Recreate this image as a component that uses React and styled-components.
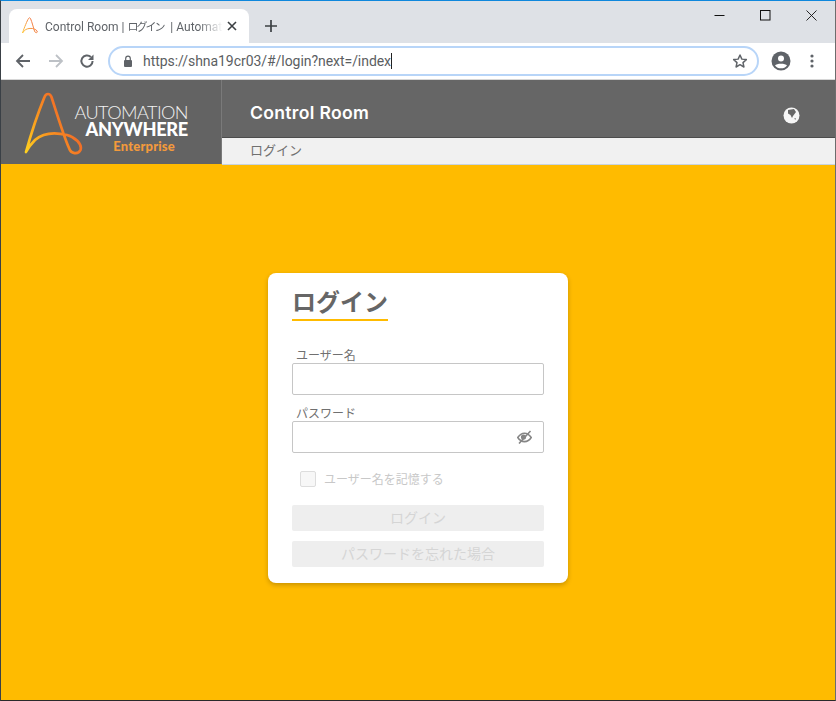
import React from "react";
import styled, { createGlobalStyle } from "styled-components";

const Global = createGlobalStyle`
  html, body { margin: 0; padding: 0; }
  body { width: 836px; height: 701px; overflow: hidden; background: #ffbb00; font-family: "Liberation Sans", "Noto Sans CJK JP", sans-serif; }
  * { box-sizing: border-box; }
`;

const Win = styled.div`
  width: 836px; height: 701px; display: flex; flex-direction: column;
  border-top: 1px solid #0f87dc; border-left: 1px solid #3a4046; border-right: 1px solid #6d6d6d;
  border-bottom: 1px solid #2a2a2a;
`;
const TabStrip = styled.div`
  height: 42px; background: #dee1e6; display: flex; align-items: flex-end; padding-left: 8px; position: relative; flex: none;
`;
const Tab = styled.div`
  width: 240px; height: 34px; background: #fff; border-radius: 8px 8px 0 0; display: flex; align-items: center;
  padding: 0 10px 0 12px; font: 12px "Roboto", "Noto Sans CJK JP", sans-serif; color: #5f6368;
`;
const TabTitle = styled.span`
  margin-left: 6px; width: 178px; margin-right: 3px; white-space: nowrap; overflow: hidden; flex: none;
  -webkit-mask-image: linear-gradient(to right, #000 86%, transparent 100%);
  mask-image: linear-gradient(to right, #000 86%, transparent 100%);
`;
const TabCjk = styled.span`font-size: 11px; letter-spacing: -2px; margin-right: 4px;`;
const NewTab = styled.div`margin: 0 0 3px 12px; height: 28px; width: 20px; display: flex; align-items: center; justify-content: center;`;
const WinControls = styled.div`position: absolute; right: 1px; top: 0; display: flex;`;
const WinBtn = styled.div`width: 46px; height: 29px; display: flex; align-items: center; justify-content: center;`;

const Toolbar = styled.div`
  height: 37px; background: #fff; display: flex; align-items: center; flex: none; border-bottom: 1px solid #d6d6d6; padding-left: 13px;
`;
const NavBtn = styled.div`width: 20px; height: 20px; display: flex; align-items: center; justify-content: center; margin-right: ${p => p.$gap}px;`;
const Omni = styled.div`
  width: 651px; height: 30px; border: 2px solid #b8d5f8; border-radius: 15px; display: flex; align-items: center; padding: 0 9px 0 13px;
  font: 14px "Roboto", sans-serif; color: #202124; margin-left: 11px; margin-bottom: 1px;
`;
const Url = styled.span`
  margin-left: 10px; flex: 1; color: #5b5e62; letter-spacing: -0.05px;
  b { font-weight: 400; color: #5b5e62; border-right: 1px solid #222; padding-right: 0; }
`;

const Header = styled.header`display: flex; align-items: flex-start; height: 85px; flex: none;`;
const LogoPanel = styled.div`
  width: 221px; height: 84px; background: #636363; border-right: 1px solid #7a7a7a; flex: none; padding: 12px 0 0 22px; display: flex;
`;
const LogoText = styled.div`
  width: 105px; display: flex; flex-direction: column; align-items: flex-end; color: #fff; padding-top: 12px;
`;
const LogoLine = styled.div`
  font: ${p => p.$w} ${p => p.$s}px/${p => p.$lh}px "Lato", sans-serif; letter-spacing: ${p => p.$ls}px; color: ${p => p.$c}; white-space: nowrap;
  margin-right: ${p => p.$mr || 0}px;
`;
const HeadRight = styled.div`flex: 1; display: flex; flex-direction: column;`;
const TitleBar = styled.div`
  height: 58px; background: #666; border-bottom: 1px solid #4c4c4c; display: flex; align-items: center; justify-content: space-between; padding: 8px 35px 0 28px;
`;
const Product = styled.div`font: 600 17.6px "Inter", sans-serif; letter-spacing: 0.3px; color: #fff;`;
const GlobeIcon = styled.svg`margin-top: 6px; flex: none;`;
const Crumb = styled.div`
  height: 27px; background: #f1f1f1; border-bottom: 1px solid #c8d4df; padding-left: 28px; font-size: 13px; line-height: 23px; color: #707070;
  font-family: "Noto Sans CJK JP", sans-serif;
`;

const Stage = styled.main`flex: 1; background: #ffbb00; display: flex; justify-content: center; padding: 108px 0 0 0;`;
const Card = styled.section`
  width: 300px; height: 310px; background: #fff; border-radius: 8px; box-shadow: 0 2px 5px rgba(0,0,0,.22); padding: 13px 24px 0;
  font-family: "Noto Sans CJK JP", sans-serif;
`;
const Title = styled.h1`
  margin: 0; display: inline-block; font: 700 24px/30px "Noto Sans CJK JP", sans-serif; color: #666; border-bottom: 2px solid #ffbb00; height: 35px;
`;
const Label = styled.label`display: block; font-size: 12px; line-height: 16px; color: #707070; padding-left: 4px; margin-top: ${p => p.$top}px;`;
const InputBox = styled.div`
  width: 252px; height: 32px; border: 1px solid #c6c6c6; border-radius: 2px; display: flex; align-items: center; justify-content: flex-end; padding-right: 11px;
`;
const Remember = styled.div`display: flex; align-items: center; margin: 18px 0 0 8px; font-size: 12px; line-height: 16px; color: #c8c8c8; gap: 8px;`;
const Check = styled.span`width: 16px; height: 16px; border: 1px solid #ddd; background: #f7f7f7; border-radius: 2px; flex: none;`;
const Btn = styled.div`
  width: 252px; height: 26px; background: #eee; border-radius: 2px; color: #d5d5d5; font-size: 14px; line-height: 25px; text-align: center;
  margin-top: ${p => p.$top}px;
`;

const Logo = () => (
  <svg width="60" height="66" viewBox="0 0 60 66" fill="none" style={{ flex: "none" }}>
    <defs>
      <linearGradient id="g" x1="0" y1="1" x2="1" y2="0.4">
        <stop offset="0" stopColor="#ffd21f" />
        <stop offset="0.45" stopColor="#f9931f" />
        <stop offset="1" stopColor="#ee5a2b" />
      </linearGradient>
    </defs>
    <path d="M3 60 C8 42 17 16 21.5 5 C23 1 27 1 28.5 5 C33 19 41 45 46 56 C48 62 55 63 57.5 58 C59.5 52 52 45 44 43 C32 40 20 41 12 48 C8 52 5 56 3 60 Z" stroke="url(#g)" strokeWidth="2.7" strokeLinejoin="round" />
  </svg>
);

export default function App() {
  return (
    <>
      <Global />
      <Win>
        <TabStrip>
          <Tab>
            <svg width="18" height="18" viewBox="0 0 18 18" fill="none" style={{ flex: "none" }}>
              <defs>
                <linearGradient id="f" x1="0" y1="1" x2="1" y2="0.4">
                  <stop offset="0" stopColor="#ffc83a" />
                  <stop offset="1" stopColor="#ee6a4a" />
                </linearGradient>
              </defs>
              <path d="M1.5 16 C3.5 10 6 4 7.5 1.5 C8.2 .6 9 .6 9.5 1.5 C11 5 12.5 11 13.5 14 C14 16 16 16 16.3 15 C16.6 13.5 14 12 11.5 11.5 C8 11 5 12 3.5 13.5 Z" stroke="url(#f)" strokeWidth="1" />
            </svg>
            <TabTitle>Control Room | <TabCjk>ログイン</TabCjk> | Automat</TabTitle>
            <svg width="10" height="10" viewBox="0 0 10 10" style={{ marginLeft: 1, flex: "none" }}>
              <path d="M1 1 L9 9 M9 1 L1 9" stroke="#3c4043" strokeWidth="1.6" />
            </svg>
          </Tab>
          <NewTab>
            <svg width="12" height="12" viewBox="0 0 12 12"><path d="M6 0 V12 M0 6 H12" stroke="#3c4043" strokeWidth="1.7" /></svg>
          </NewTab>
          <WinControls>
            <WinBtn><svg width="11" height="11" viewBox="0 0 11 11"><path d="M0.5 5.5 H10.5" stroke="#111" /></svg></WinBtn>
            <WinBtn><svg width="11" height="11" viewBox="0 0 11 11"><rect x=".5" y=".5" width="9.5" height="9.5" fill="none" stroke="#111" /></svg></WinBtn>
            <WinBtn><svg width="11" height="11" viewBox="0 0 11 11"><path d="M.5 .5 L10.5 10.5 M10.5 .5 L.5 10.5" stroke="#111" strokeWidth=".9" /></svg></WinBtn>
          </WinControls>
        </TabStrip>
        <Toolbar>
          <NavBtn $gap={12}>
            <svg width="16" height="16" viewBox="0 0 16 16" fill="none" style={{ marginLeft: -2 }}><path d="M15 8 H2 M8 2 L2 8 L8 14" stroke="#5f6368" strokeWidth="1.8" /></svg>
          </NavBtn>
          <NavBtn $gap={11}>
            <svg width="16" height="16" viewBox="0 0 16 16" fill="none"><path d="M1 8 H14 M8 2 L14 8 L8 14" stroke="#bdc1c6" strokeWidth="1.8" /></svg>
          </NavBtn>
          <NavBtn $gap={0}>
            <svg width="16" height="16" viewBox="0 0 16 16" fill="none"><path d="M13.6 8 A5.6 5.6 0 1 1 11.9 4" stroke="#5f6368" strokeWidth="2" /><path d="M14.5 1.5 V7 H9 Z" fill="#5f6368" /></svg>
          </NavBtn>
          <Omni>
            <svg width="10" height="12" viewBox="0 0 10 12"><rect x="1" y="5" width="8" height="7" rx="1" fill="#5f6368" /><path d="M2.7 5.5 V3.5 a2.3 2.3 0 0 1 4.6 0 V5.5" fill="none" stroke="#5f6368" strokeWidth="1.2" /></svg>
            <Url><b>https://shna19cr03/#/login?next=/index</b></Url>
            <svg width="16" height="16" viewBox="0 0 24 24" fill="none" stroke="#5f6368" strokeWidth="2.2" strokeLinejoin="round"><path d="M12 3 L14.8 9.2 L21.5 9.9 L16.5 14.4 L17.9 21 L12 17.6 L6.1 21 L7.5 14.4 L2.5 9.9 L9.2 9.2 Z" /></svg>
          </Omni>
          <svg width="20" height="20" viewBox="0 0 20 20" style={{ marginLeft: 12 }}>
            <circle cx="10" cy="10" r="9.5" fill="#5f6368" />
            <circle cx="10" cy="7.5" r="3" fill="#fff" />
            <path d="M4 14.5 C5.5 12 14.5 12 16 14.5 C14.5 16.6 12.5 17.3 10 17.3 C7.5 17.3 5.5 16.6 4 14.5 Z" fill="#fff" />
          </svg>
          <svg width="4" height="14" viewBox="0 0 4 14" style={{ marginLeft: 19 }}>
            <circle cx="2" cy="2" r="1.6" fill="#5f6368" /><circle cx="2" cy="7" r="1.6" fill="#5f6368" /><circle cx="2" cy="12" r="1.6" fill="#5f6368" />
          </svg>
        </Toolbar>
        <Header>
          <LogoPanel>
            <Logo />
            <LogoText>
              <LogoLine $w="300" $s={18.2} $lh={17} $ls={-0.6} $c="#f2f2f2">AUTOMATION</LogoLine>
              <LogoLine $w="900" $s={18.2} $lh={17} $ls={-0.3} $c="#fff">ANYWHERE</LogoLine>
              <LogoLine $w="900" $s={13} $lh={16} $ls={0.2} $mr={13} $c="#f39a3c">Enterprise</LogoLine>
            </LogoText>
          </LogoPanel>
          <HeadRight>
            <TitleBar>
              <Product>Control Room</Product>
              <GlobeIcon width="17" height="17" viewBox="0 0 17 17">
                <circle cx="8.5" cy="8.5" r="8" fill="#f5f5f5" />
                <path d="M5 3 L11 2 L13 5 L10 9 L9 11 L7.5 8 L5 6.5 Z" fill="#666" />
                <path d="M11 11.5 L13 11 L12.5 13 Z" fill="#888" />
              </GlobeIcon>
            </TitleBar>
            <Crumb>ログイン</Crumb>
          </HeadRight>
        </Header>
        <Stage>
          <Card>
            <Title>ログイン</Title>
            <Label $top={26}>ユーザー名</Label>
            <InputBox />
            <Label $top={10}>パスワード</Label>
            <InputBox>
              <svg width="15" height="14" viewBox="0 0 15 14" fill="none" stroke="#858585" strokeWidth="1.6">
                <path d="M.8 7.5 C3 4 5.5 3.2 7.5 3.2 C9.5 3.2 12 4 14.2 7.5 C12 11 9.5 11.6 7.5 11.6 C5.5 11.6 3 11 .8 7.5 Z" />
                <path d="M2 13.5 L13.5 1" />
                <circle cx="6.5" cy="7" r="2.6" fill="#858585" stroke="none" />
              </svg>
            </InputBox>
            <Remember><Check />ユーザー名を記憶する</Remember>
            <Btn $top={18}>ログイン</Btn>
            <Btn $top={10}>パスワードを忘れた場合</Btn>
          </Card>
        </Stage>
      </Win>
    </>
  );
}
